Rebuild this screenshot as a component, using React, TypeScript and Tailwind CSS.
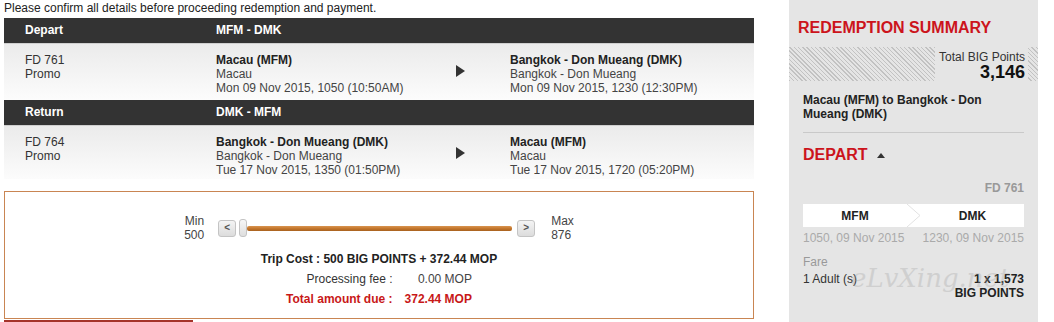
import React from "react";

function Tri() {
  return (
    <svg width="9" height="12" viewBox="0 0 9 12" className="block">
      <path d="M0 0 L9 6 L0 12 Z" fill="#333" />
    </svg>
  );
}

function Header({ label, route }: { label: string; route: string }) {
  return (
    <div className="h-[25px] bg-[#333] flex items-center font-bold text-white">
      <div className="w-[212px] pl-[21px]">{label}</div>
      <div>{route}</div>
    </div>
  );
}

function FlightRow({
  code,
  h,
  from,
  to,
}: {
  code: string;
  h: string;
  from: [string, string, string];
  to: [string, string, string];
}) {
  return (
    <div className={`${h} flex border-t border-[#cfcfcf] bg-linear-to-b from-[#ebebeb] to-[#fcfcfc] pt-[9px] leading-[14px]`}>
      <div className="w-[212px] pl-[21px] text-[#333]">
        <div>{code}</div>
        <div>Promo</div>
      </div>
      <div className="w-[240px] text-[#444]">
        <div className="font-bold text-[#222]">{from[0]}</div>
        <div>{from[1]}</div>
        <div>{from[2]}</div>
      </div>
      <div className="w-[54px] pt-[12px]">
        <Tri />
      </div>
      <div className="text-[#444]">
        <div className="font-bold text-[#222]">{to[0]}</div>
        <div>{to[1]}</div>
        <div>{to[2]}</div>
      </div>
    </div>
  );
}

function SlideBtn({ ch }: { ch: string }) {
  return (
    <div className="w-[18px] h-[17px] rounded-[3px] border border-[#c4c4c4] bg-linear-to-b from-[#f4f4f4] to-[#dcdcdc] flex items-center justify-center text-[10px] font-bold text-[#555] leading-none">
      {ch}
    </div>
  );
}

export default function App() {
  return (
    <div className="w-[1054px] h-[322px] bg-white flex overflow-hidden font-['Liberation_Sans',Arial,sans-serif] text-[12px] text-[#333]">
      <div className="w-[750px] ml-[4px] flex flex-col shrink-0">
        <p className="h-[18px] pt-[1px] leading-[14px] text-[#222]">
          Please confirm all details before proceeding redemption and payment.
        </p>
        <Header label="Depart" route="MFM - DMK" />
        <FlightRow
          h="h-[57px]"
          code="FD 761"
          from={["Macau (MFM)", "Macau", "Mon 09 Nov 2015, 1050 (10:50AM)"]}
          to={["Bangkok - Don Mueang (DMK)", "Bangkok - Don Mueang", "Mon 09 Nov 2015, 1230 (12:30PM)"]}
        />
        <Header label="Return" route="DMK - MFM" />
        <FlightRow
          h="h-[55px]"
          code="FD 764"
          from={["Bangkok - Don Mueang (DMK)", "Bangkok - Don Mueang", "Tue 17 Nov 2015, 1350 (01:50PM)"]}
          to={["Macau (MFM)", "Macau", "Tue 17 Nov 2015, 1720 (05:20PM)"]}
        />
        <div className="mt-[12px] h-[128px] w-[750px] border border-[#c98552] flex flex-col pt-[22px]">
          <div className="flex items-center justify-center">
            <div className="text-right leading-[14px] text-[#444]">
              <div>Min</div>
              <div>500</div>
            </div>
            <div className="ml-[14px]">
              <SlideBtn ch="<" />
            </div>
            <div className="ml-[3px] w-[8px] h-[18px] rounded-[3px] border border-[#c4c4c4] bg-linear-to-b from-[#f6f6f6] to-[#dedede]" />
            <div className="w-[265px] h-[5px] rounded-[2px] bg-linear-to-b from-[#d9944f] via-[#c4772d] to-[#a8611f]" />
            <div className="ml-[5px]">
              <SlideBtn ch=">" />
            </div>
            <div className="ml-[16px] leading-[14px] text-[#444]">
              <div>Max</div>
              <div>876</div>
            </div>
          </div>
          <div className="mt-[7px] text-center font-bold leading-[20px] text-[#222]">
            Trip Cost : 500 BIG POINTS + 372.44 MOP
          </div>
          <div className="flex justify-center">
            <div className="grid grid-cols-[auto_auto] gap-x-[12px] leading-[20px] text-right">
              <div className="text-[#333]">Processing fee :</div>
              <div className="text-[#444]">0.00 MOP</div>
              <div className="font-bold text-[#c81818]">Total amount due :</div>
              <div className="font-bold text-[#c81818]">372.44 MOP</div>
            </div>
          </div>
        </div>
        <div className="mt-px h-[2px] w-[189px] bg-[#a5332a]" />
      </div>

      <div className="relative ml-[35px] w-[249px] h-[322px] shrink-0 bg-[#e5e5e5] flex flex-col">
        <div className="pt-[19px] pl-[9px] text-[16px] leading-[18px] font-bold text-[#cc141c]">
          REDEMPTION SUMMARY
        </div>
        <div className="mt-[10px] h-[34px] flex justify-end bg-[repeating-linear-gradient(45deg,#c2c2c2_0px,#c2c2c2_1px,#e5e5e5_1px,#e5e5e5_3px)]">
          <div className="mr-[10px] w-[93px] bg-[#e5e5e5] pt-[3px] pr-[3px] text-right">
            <div className="leading-[14px] text-[#333]">Total BIG Points</div>
            <div className="text-[18px] leading-[16px] font-bold text-[#111]">3,146</div>
          </div>
        </div>
        <div className="mx-[14px] mt-[12px] pb-[11px] border-b border-[#c9c9c9] font-bold leading-[14px] text-[#222]">
          Macau (MFM) to Bangkok - Don Mueang (DMK)
        </div>
        <div className="mx-[14px] mt-[13px] flex items-center">
          <span className="text-[16px] leading-[18px] font-bold text-[#cc141c]">DEPART</span>
          <svg width="8" height="5" viewBox="0 0 8 5" className="ml-[9px] mt-[1px]">
            <path d="M0 5 L4 0 L8 5 Z" fill="#333" />
          </svg>
        </div>
        <div className="mx-[14px] mt-[17px] text-right font-bold leading-[14px] text-[#999]">FD 761</div>
        <div className="mx-[14px] mt-[9px] h-[23px] bg-white flex items-center font-bold text-[#222]">
          <div className="w-[104px] text-center">MFM</div>
          <svg width="14" height="23" viewBox="0 0 14 23" className="block">
            <path d="M0 0 L13 11.5 L0 23" fill="none" stroke="#e2e2e2" strokeWidth="1" />
          </svg>
          <div className="flex-1 text-center">DMK</div>
        </div>
        <div className="mx-[14px] mt-[4px] flex justify-between leading-[14px] text-[#aaa]">
          <span>1050, 09 Nov 2015</span>
          <span>1230, 09 Nov 2015</span>
        </div>
        <div className="mx-[14px] mt-[10px] leading-[14px] text-[#999]">Fare</div>
        <div className="mx-[14px] mt-[3px] flex justify-between leading-[14px] text-[#333]">
          <span>1 Adult (s)</span>
          <div className="text-right font-bold text-[#222]">
            <div>1 x 1,573</div>
            <div>BIG POINTS</div>
          </div>
        </div>
        <div className="absolute left-[62px] top-[262px] font-['DejaVu_Serif',serif] italic text-[26px] leading-[32px] text-[#a0a0a0] opacity-30 pointer-events-none">
          eLvXing.net
        </div>
      </div>
    </div>
  );
}
